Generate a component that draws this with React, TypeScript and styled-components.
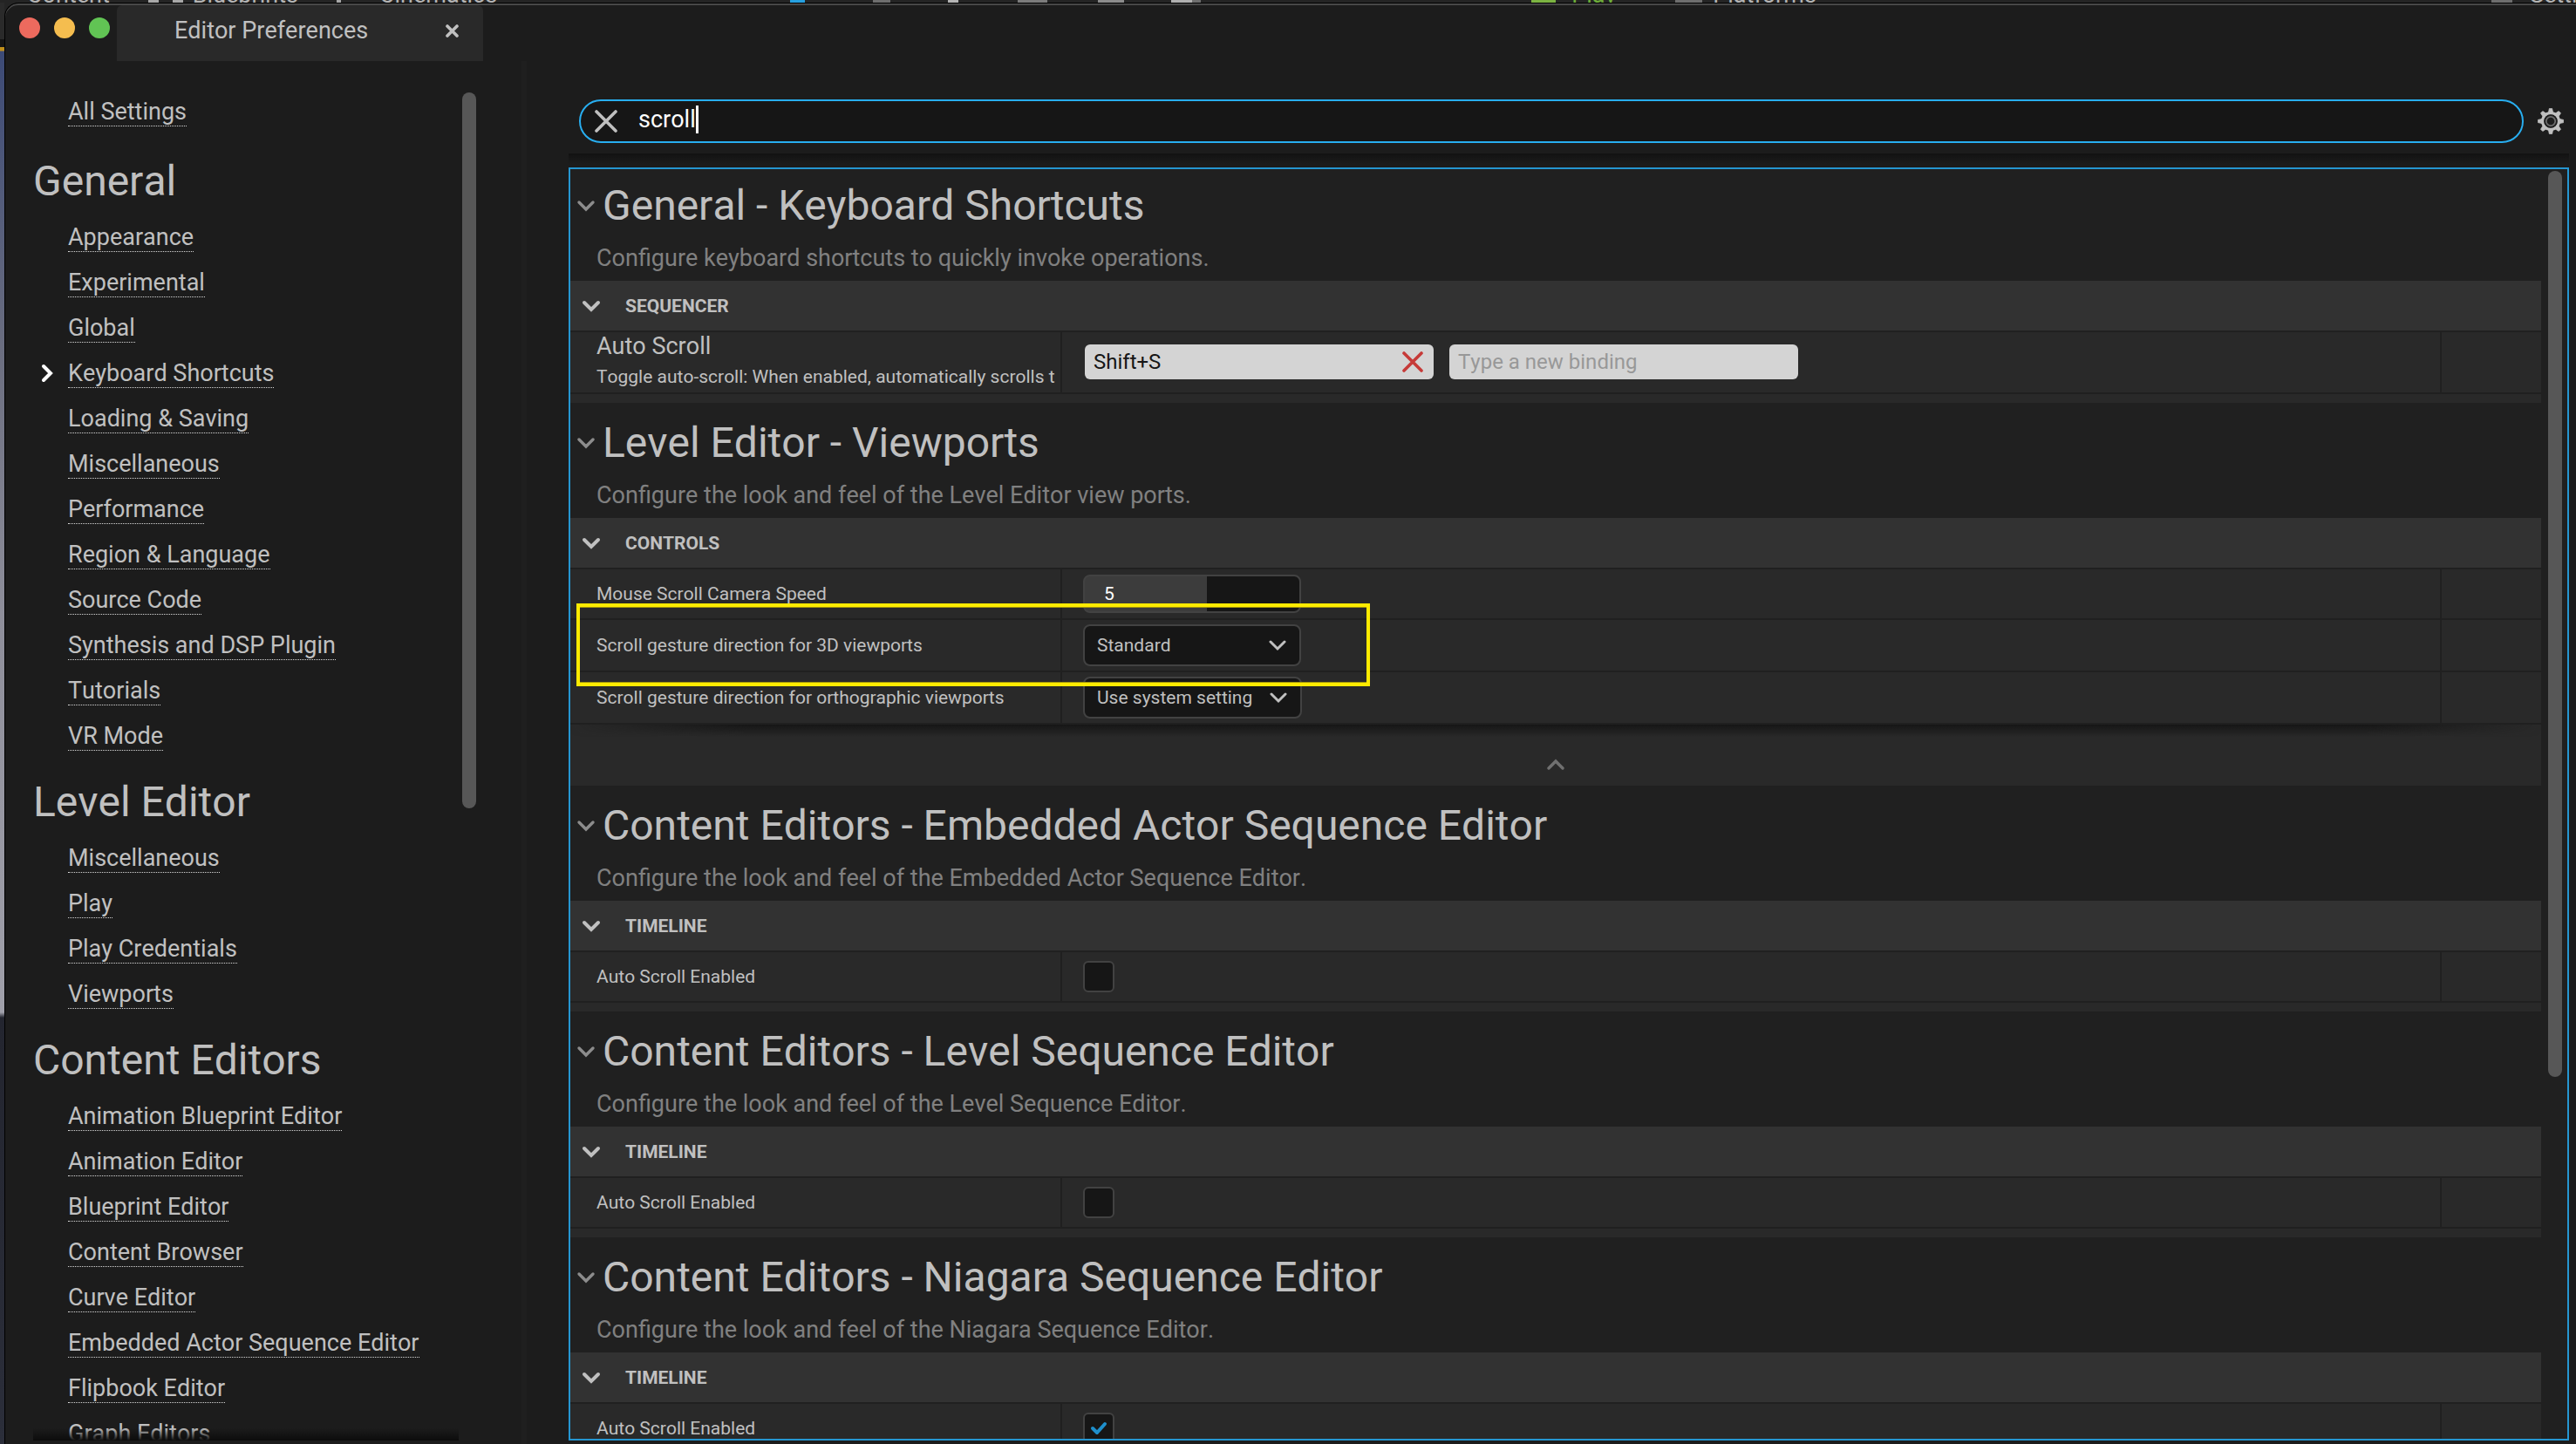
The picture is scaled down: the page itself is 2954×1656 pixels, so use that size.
import React from "react";
import styled, { createGlobalStyle } from "styled-components";

const color = {
  window: "#1c1c1c",
  tab: "#292929",
  panel: "#202020",
  cell: "#292929",
  category: "#323232",
  recessed: "#161616",
  outline: "#424242",
  text: "#c0c0c0",
  muted: "#808080",
  thumb: "#575757",
  accent: "#28aef0",
  focus: "#2596d1",
  binding: "#d4d4d4",
};

const GlobalStyle = createGlobalStyle`
  *, *::before, *::after { box-sizing: border-box; }
  body {
    margin: 0;
    background: #242424;
    color: ${color.text};
    font-family: Roboto, "Liberation Sans", sans-serif;
    font-size: 27px;
    font-kerning: none;
    line-height: 32px;
  }
  button, input, select { font: inherit; font-kerning: none; color: inherit; margin: 0; }
  button { padding: 0; border: 0; background: none; }
  h1, h2, h3, p, ul { margin: 0; padding: 0; font-weight: 400; }
  svg { display: block; }
`;

/* ---------- level editor window behind the preferences ---------- */

const Desktop = styled.div`
  display: grid;
  grid-template: 3px minmax(0, 1fr) / 5px minmax(0, 1fr);
  height: 100vh;
  overflow: hidden;
`;

const ToolbarSliver = styled.div`
  grid-column: 1 / -1;
  display: flex;
  align-items: flex-end;
  overflow: hidden;
  background: #242424;
  white-space: nowrap;
`;

const ToolbarItem = styled.span<{ $before: number; $tint?: string }>`
  flex: none;
  margin: 0 0 -7px ${(p) => p.$before}px;
  color: ${(p) => p.$tint ?? "#b4b4b4"};
`;

const ToolbarChip = styled.i<{ $before: number; $width: number; $tint: string }>`
  flex: none;
  width: ${(p) => p.$width}px;
  height: 3px;
  margin-left: ${(p) => p.$before}px;
  background: ${(p) => p.$tint};
`;

const ViewportSliver = styled.div`
  background: linear-gradient(
    #2a2a2a 0 42px,
    #151515 42px 51px,
    #c08f1c 51px 55px,
    #3c4a76 56px,
    #6b6e80 400px,
    #8e8e9a 700px,
    #a0a0aa 1158px,
    #23252f 1164px,
    #2b2e3a 100%
  );
`;

/* ---------- window frame ---------- */

const Window = styled.main`
  display: flex;
  flex-direction: column;
  min-height: 0;
  padding-top: 2px;
  overflow: hidden;
  border: solid #000;
  border-width: 1px 0 0 1px;
  border-top-left-radius: 16px;
  background: ${color.window};
  box-shadow: inset 0 2px 0 #484848;
`;

const TitleBar = styled.header`
  display: flex;
  flex: none;
  height: 64px;
`;

const Lights = styled.div`
  display: flex;
  gap: 16px;
  padding: 14px 8px 0 16px;
`;

const Light = styled.button<{ $tint: string }>`
  width: 24px;
  height: 24px;
  border-radius: 50%;
  background: ${(p) => p.$tint};
`;

const Tab = styled.div`
  display: flex;
  justify-content: space-between;
  width: 420px;
  padding: 13px 28px 0 66px;
  border-radius: 6px 6px 0 0;
  background: ${color.tab};
`;

const TabTitle = styled.h1`
  font-size: 27px;
  line-height: 32px;
`;

const TabClose = styled.button`
  display: grid;
  place-items: center;
  width: 16px;
  height: 32px;
`;

const Columns = styled.div`
  display: flex;
  flex: 1;
  min-height: 0;
  padding-bottom: 4px;
`;

/* ---------- sidebar ---------- */

const Sidebar = styled.nav`
  display: flex;
  flex: none;
  width: 592px;
  padding: 36px 52px 0 32px;
`;

const CategoryList = styled.div`
  position: relative;
  flex: 1;
  min-width: 0;
  margin-right: 4px;
  overflow: hidden;
  padding-top: 6px;
`;

const ListFade = styled.div`
  position: absolute;
  inset: auto 0 0;
  height: 14px;
  background: linear-gradient(transparent, #0c0c0c);
`;

const GroupTitle = styled.h2`
  margin: 12px 0 20px;
  font-size: 48px;
  line-height: 56px;
`;

const LinkList = styled.ul<{ $spaced?: boolean }>`
  display: grid;
  gap: 19px;
  padding: 0 0 ${(p) => (p.$spaced ? 23 : 19)}px 40px;
  list-style: none;
`;

const LinkRow = styled.li`
  position: relative;
  display: flex;
`;

const SettingLink = styled.a`
  border-bottom: 1px dotted #d8d8d8;
  color: inherit;
  text-decoration: none;
  white-space: nowrap;
`;

const CurrentMark = styled.svg`
  position: absolute;
  left: -32px;
  top: 5px;
`;

const Track = styled.div`
  display: flex;
  flex-direction: column;
  flex: none;
  width: 16px;
`;

const Thumb = styled.div<{ $share: number }>`
  flex: ${(p) => p.$share} 0 0;
  border-radius: 8px;
  background: ${color.thumb};
`;

const Rest = styled.div<{ $share: number }>`
  flex: ${(p) => p.$share} 0 0;
`;

const Splitter = styled.div`
  flex: none;
  width: 6px;
  margin-bottom: -4px;
  background: #1f1f1f;
`;

/* ---------- settings panel ---------- */

const Panel = styled.section`
  display: flex;
  flex: 1;
  flex-direction: column;
  min-width: 0;
  padding: 44px 8px 0 48px;
`;

const SearchRow = styled.div`
  display: flex;
  flex: none;
  align-items: center;
  gap: 16px;
  padding: 0 6px 12px 12px;
`;

const SearchBox = styled.label`
  display: flex;
  flex: 1;
  align-items: center;
  height: 50px;
  padding-left: 16px;
  border: 2px solid ${color.accent};
  border-radius: 25px;
  background: ${color.recessed};
`;

const SearchText = styled.span`
  display: flex;
  height: 32px;
  margin: 0 0 4px 24px;
`;

const SearchInput = styled.input`
  field-sizing: content;
  min-width: 20px;
  padding: 0;
  border: 0;
  outline: 0;
  background: none;
  color: #fff;
`;

const Caret = styled.span`
  width: 3px;
  background: #fff;
`;

const edgeFade = "linear-gradient(90deg, transparent, #000 200px, #000 calc(100% - 200px), transparent)";

const SearchShadow = styled.div`
  flex: none;
  height: 16px;
  background: linear-gradient(#121212, transparent 12px);
`;

const Results = styled.div`
  display: flex;
  flex: 1;
  min-height: 0;
  gap: 8px;
  padding-right: 6px;
  overflow: hidden;
  border: 2px solid ${color.focus};
  background: ${color.panel};
`;

const ResultTrack = styled(Track)`
  padding: 2px 0;
`;

const SectionList = styled.div`
  display: flex;
  flex: 1;
  flex-direction: column;
  gap: 4px;
  min-width: 0;
  overflow: hidden;
`;

const Section = styled.section`
  flex: none;
`;

const SectionHead = styled.header`
  padding: 14px 7px 10px;
`;

const SectionTitle = styled.h2`
  display: flex;
  align-items: center;
  gap: 8px;
  font-size: 48px;
  line-height: 56px;
`;

const SectionNote = styled.p`
  padding: 16px 0 0 23px;
  color: ${color.muted};
`;

const Category = styled.h3`
  display: flex;
  align-items: center;
  gap: 28px;
  height: 57px;
  padding-left: 13px;
  background: ${color.category};
  font-size: 21px;
  font-weight: 700;
  line-height: 24px;
`;

const Row = styled.div<{ $height: number }>`
  display: grid;
  grid-template-columns: 562fr 1580fr 114px;
  grid-template-rows: ${(p) => p.$height}px;
  column-gap: 2px;
  padding-top: 2px;
`;

const Cell = styled.div`
  display: flex;
  align-items: center;
  gap: 18px;
  min-width: 0;
  padding-left: 24px;
  background: ${color.cell};
`;

const NameCell = styled(Cell)`
  padding-left: 30px;
  overflow: hidden;
  font-size: 21px;
  line-height: 24px;
  white-space: nowrap;
`;

const CommandName = styled.div`
  display: grid;
  gap: 7px;
  padding-bottom: 7px;
`;

const CommandLabel = styled.label`
  font-size: 27px;
  line-height: 32px;
`;

const Footer = styled.div`
  height: 10px;
  margin-top: 2px;
  background: ${color.cell};
`;

const AdvancedFooter = styled.div`
  display: grid;
  grid-template-rows: 14px 1fr;
  height: 70px;
  margin-top: 2px;
  background: ${color.cell};
`;

const AdvancedShadow = styled.div`
  background: linear-gradient(#161616, transparent);
  mask-image: ${edgeFade};
`;

const AdvancedToggle = styled.button`
  display: grid;
  place-items: center;
  padding-top: 8px;
`;

/* ---------- value controls ---------- */

const BindingCell = styled(Cell)`
  padding: 0 0 2px 26px;
`;

const Binding = styled.div`
  display: flex;
  align-items: center;
  width: 400px;
  height: 40px;
  padding: 0 12px 0 10px;
  border-radius: 6px;
  background: ${color.binding};
`;

const BindingInput = styled.input`
  flex: 1;
  min-width: 0;
  height: 28px;
  padding: 0;
  border: 0;
  outline: 0;
  background: none;
  color: #161616;
  font-size: 24px;

  &::placeholder {
    color: #989898;
  }
`;

const NumberBox = styled.input`
  width: 250px;
  height: 44px;
  padding: 0 0 0 22px;
  border: 2px solid ${color.outline};
  border-radius: 8px;
  outline: 0;
  background: linear-gradient(90deg, #3c3c3c 57%, ${color.recessed} 57%);
  color: #fff;
  font-size: 21px;
`;

const SelectBox = styled.span`
  display: inline-grid;
  align-items: center;

  & > * {
    grid-area: 1 / 1;
  }

  & > svg {
    justify-self: end;
    margin-right: 17px;
    pointer-events: none;
  }
`;

const SelectInput = styled.select`
  appearance: none;
  min-width: 250px;
  height: 48px;
  padding: 0 54px 0 14px;
  border: 2px solid ${color.outline};
  border-radius: 8px;
  outline: 0;
  background: ${color.recessed};
  font-size: 21px;
`;

const TickBox = styled.span`
  display: inline-grid;
  place-items: center;

  & > * {
    grid-area: 1 / 1;
  }

  & > svg {
    pointer-events: none;
  }
`;

const TickInput = styled.input`
  appearance: none;
  width: 36px;
  height: 36px;
  border: 2px solid ${color.outline};
  border-radius: 6px;
  background: ${color.recessed};
`;

const Annotated = styled.div`
  position: relative;
`;

const Highlight = styled.div`
  position: absolute;
  left: 7px;
  top: -17px;
  z-index: 1;
  width: 910px;
  height: 95px;
  border: 4px solid #ffeb00;
  box-shadow: inset 0 1px #a3970f, inset 0 -1px #a3970f;
  pointer-events: none;
`;

/* ---------- icons ---------- */

const Chevron = ({ tone = color.text, up = false, weight = 3.4 }) => (
  <svg width="22" height="14" viewBox="0 0 22 14" fill="none" stroke={tone} strokeWidth={weight} strokeLinecap="round" strokeLinejoin="miter" aria-hidden>
    <path d={up ? "M3 11 L11 3 L19 11" : "M3 3 L11 11 L19 3"} />
  </svg>
);

const SmallChevron = () => (
  <svg width="20" height="14" viewBox="0 0 20 14" fill="none" stroke={color.text} strokeWidth="3" strokeLinecap="round" aria-hidden>
    <path d="M2 3 L10 11 L18 3" />
  </svg>
);

const Cross = ({ size = 24, tone = color.text, weight = 3.6 }) => (
  <svg width={size} height={size} viewBox={`0 0 ${size} ${size}`} fill="none" stroke={tone} strokeWidth={weight} strokeLinecap="round" aria-hidden>
    <path d={`M2 2 L${size - 2} ${size - 2} M${size - 2} 2 L2 ${size - 2}`} />
  </svg>
);

const Gear = () => (
  <svg width="30" height="30" viewBox="0 0 30 30" aria-hidden>
    {[0, 45, 90, 135].map((angle) => (
      <path
        key={angle}
        d="M13.4 0.4 H16.6 L18 7 H12 Z M13.4 29.6 H16.6 L18 23 H12 Z"
        fill={color.text}
        stroke={color.text}
        strokeWidth="0.8"
        strokeLinejoin="round"
        transform={`rotate(${angle} 15 15)`}
      />
    ))}
    <circle cx="15" cy="15" r="9.4" fill="none" stroke={color.text} strokeWidth="3.2" />
    <circle cx="15" cy="15" r="7.8" fill="#1c1c1c" />
    <circle cx="15" cy="15" r="5.2" fill="none" stroke="#6c6c6c" strokeWidth="1.8" />
  </svg>
);

const Tick = () => (
  <svg width="20" height="16" viewBox="0 0 20 16" fill="none" stroke="#1f8fcb" strokeWidth="4" strokeLinecap="round" strokeLinejoin="round" aria-hidden>
    <path d="M3 8 L8 13 L17 3" />
  </svg>
);

/* ---------- data ---------- */

const groups = [
  {
    title: "General",
    items: [
      "Appearance", "Experimental", "Global", "Keyboard Shortcuts", "Loading & Saving", "Miscellaneous",
      "Performance", "Region & Language", "Source Code", "Synthesis and DSP Plugin", "Tutorials", "VR Mode",
    ],
  },
  { title: "Level Editor", items: ["Miscellaneous", "Play", "Play Credentials", "Viewports"] },
  {
    title: "Content Editors",
    items: [
      "Animation Blueprint Editor", "Animation Editor", "Blueprint Editor", "Content Browser",
      "Curve Editor", "Embedded Actor Sequence Editor", "Flipbook Editor", "Graph Editors",
    ],
  },
];

const timelines = [
  { name: "Embedded Actor Sequence Editor", on: false },
  { name: "Level Sequence Editor", on: false },
  { name: "Niagara Sequence Editor", on: true },
];

/* ---------- parts ---------- */

function SettingSection(props: { title: string; note: string; category: string; children: React.ReactNode }) {
  return (
    <Section>
      <SectionHead>
        <SectionTitle>
          <Chevron tone="#8c8c8c" />
          {props.title}
        </SectionTitle>
        <SectionNote>{props.note}</SectionNote>
      </SectionHead>
      <Category>
        <Chevron weight={4} />
        {props.category}
      </Category>
      {props.children}
    </Section>
  );
}

function PropertyRow(props: { id: string; label: string; height: number; children: React.ReactNode }) {
  return (
    <Row $height={props.height}>
      <NameCell>
        <label htmlFor={props.id}>{props.label}</label>
      </NameCell>
      <Cell>{props.children}</Cell>
      <Cell />
    </Row>
  );
}

function Dropdown({ id, options }: { id: string; options: string[] }) {
  return (
    <SelectBox>
      <SelectInput id={id} defaultValue={options[0]}>
        {options.map((option) => (
          <option key={option}>{option}</option>
        ))}
      </SelectInput>
      <SmallChevron />
    </SelectBox>
  );
}

function SettingsNav() {
  return (
    <Sidebar aria-label="Settings categories">
      <CategoryList>
        <LinkList $spaced>
          <LinkRow>
            <SettingLink href="#all">All Settings</SettingLink>
          </LinkRow>
        </LinkList>
        {groups.map((group) => (
          <React.Fragment key={group.title}>
            <GroupTitle>{group.title}</GroupTitle>
            <LinkList>
              {group.items.map((item) => (
                <LinkRow key={item}>
                  {item === "Keyboard Shortcuts" && (
                    <CurrentMark width="16" height="22" viewBox="0 0 16 22" fill="none" stroke="#fff" strokeWidth="4" strokeLinecap="round" aria-hidden>
                      <path d="M4 3 L12 11 L4 19" />
                    </CurrentMark>
                  )}
                  <SettingLink href="#setting">{item}</SettingLink>
                </LinkRow>
              ))}
            </LinkList>
          </React.Fragment>
        ))}
        <ListFade />
      </CategoryList>
      <Track>
        <Thumb $share={821} />
        <Rest $share={725} />
      </Track>
    </Sidebar>
  );
}

export default function App() {
  return (
    <Desktop>
      <GlobalStyle />
      <ToolbarSliver aria-hidden>
        <ToolbarItem $before={31}>Content</ToolbarItem>
        <ToolbarChip $before={44} $width={12} $tint="#a8a8a8" />
        <ToolbarChip $before={16} $width={12} $tint="#a8a8a8" />
        <ToolbarItem $before={11}>Blueprints</ToolbarItem>
        <ToolbarChip $before={44} $width={5} $tint="#a8a8a8" />
        <ToolbarItem $before={44}>Cinematics</ToolbarItem>
        <ToolbarChip $before={336} $width={17} $tint="#26a0e0" />
        <ToolbarChip $before={78} $width={20} $tint="#6e6e6e" />
        <ToolbarChip $before={66} $width={12} $tint="#b4b4b4" />
        <ToolbarChip $before={68} $width={34} $tint="#7c7c7c" />
        <ToolbarChip $before={58} $width={30} $tint="#8c8c8c" />
        <ToolbarChip $before={54} $width={24} $tint="#b0b0b0" />
        <ToolbarChip $before={0} $width={10} $tint="#6e6e6e" />
        <ToolbarChip $before={379} $width={28} $tint="#7cb342" />
        <ToolbarItem $before={18} $tint="#6fae3a">Play</ToolbarItem>
        <ToolbarChip $before={68} $width={31} $tint="#6e6e6e" />
        <ToolbarItem $before={12}>Platforms</ToolbarItem>
        <ToolbarChip $before={774} $width={24} $tint="#6e6e6e" />
        <ToolbarItem $before={20}>Settings</ToolbarItem>
      </ToolbarSliver>
      <ViewportSliver />

      <Window>
        <TitleBar>
          <Lights>
            <Light $tint="#ed6a5e" aria-label="Close window" />
            <Light $tint="#f5bd4f" aria-label="Minimize window" />
            <Light $tint="#61c454" aria-label="Zoom window" />
          </Lights>
          <Tab>
            <TabTitle>Editor Preferences</TabTitle>
            <TabClose aria-label="Close tab">
              <Cross size={15} />
            </TabClose>
          </Tab>
        </TitleBar>

        <Columns>
          <SettingsNav />
          <Splitter />
          <Panel>
            <SearchRow>
              <SearchBox>
                <Cross size={26} />
                <SearchText>
                  <SearchInput aria-label="Search settings" defaultValue="scroll" />
                  <Caret />
                </SearchText>
              </SearchBox>
              <button aria-label="View options">
                <Gear />
              </button>
            </SearchRow>
            <SearchShadow />

            <Results>
              <SectionList>
                <SettingSection
                  title="General - Keyboard Shortcuts"
                  note="Configure keyboard shortcuts to quickly invoke operations."
                  category="SEQUENCER"
                >
                  <Row $height={69}>
                    <NameCell>
                      <CommandName>
                        <CommandLabel htmlFor="binding">Auto Scroll</CommandLabel>
                        <span>Toggle auto-scroll: When enabled, automatically scrolls t</span>
                      </CommandName>
                    </NameCell>
                    <BindingCell>
                      <Binding>
                        <BindingInput id="binding" defaultValue="Shift+S" />
                        <button aria-label="Remove binding">
                          <Cross size={24} tone="#c63a38" />
                        </button>
                      </Binding>
                      <Binding>
                        <BindingInput aria-label="New binding" placeholder="Type a new binding" />
                      </Binding>
                    </BindingCell>
                    <Cell />
                  </Row>
                  <Footer />
                </SettingSection>

                <SettingSection
                  title="Level Editor - Viewports"
                  note="Configure the look and feel of the Level Editor view ports."
                  category="CONTROLS"
                >
                  <PropertyRow id="speed" label="Mouse Scroll Camera Speed" height={56}>
                    <NumberBox id="speed" defaultValue="5" />
                  </PropertyRow>
                  <Annotated>
                    <PropertyRow id="gesture3d" label="Scroll gesture direction for 3D viewports" height={58}>
                      <Dropdown id="gesture3d" options={["Standard"]} />
                    </PropertyRow>
                    <Highlight />
                  </Annotated>
                  <PropertyRow id="gestureOrtho" label="Scroll gesture direction for orthographic viewports" height={58}>
                    <Dropdown id="gestureOrtho" options={["Use system setting"]} />
                  </PropertyRow>
                  <AdvancedFooter>
                    <AdvancedShadow />
                    <AdvancedToggle aria-label="Hide advanced">
                      <Chevron up tone="#707070" />
                    </AdvancedToggle>
                  </AdvancedFooter>
                </SettingSection>

                {timelines.map(({ name, on }) => (
                  <SettingSection
                    key={name}
                    title={`Content Editors - ${name}`}
                    note={`Configure the look and feel of the ${name}.`}
                    category="TIMELINE"
                  >
                    <PropertyRow id={name} label="Auto Scroll Enabled" height={56}>
                      <TickBox>
                        <TickInput type="checkbox" id={name} defaultChecked={on} />
                        {on && <Tick />}
                      </TickBox>
                    </PropertyRow>
                    <Footer />
                  </SettingSection>
                ))}
              </SectionList>
              <ResultTrack>
                <Thumb $share={1039} />
                <Rest $share={413} />
              </ResultTrack>
            </Results>
          </Panel>
        </Columns>
      </Window>
    </Desktop>
  );
}
